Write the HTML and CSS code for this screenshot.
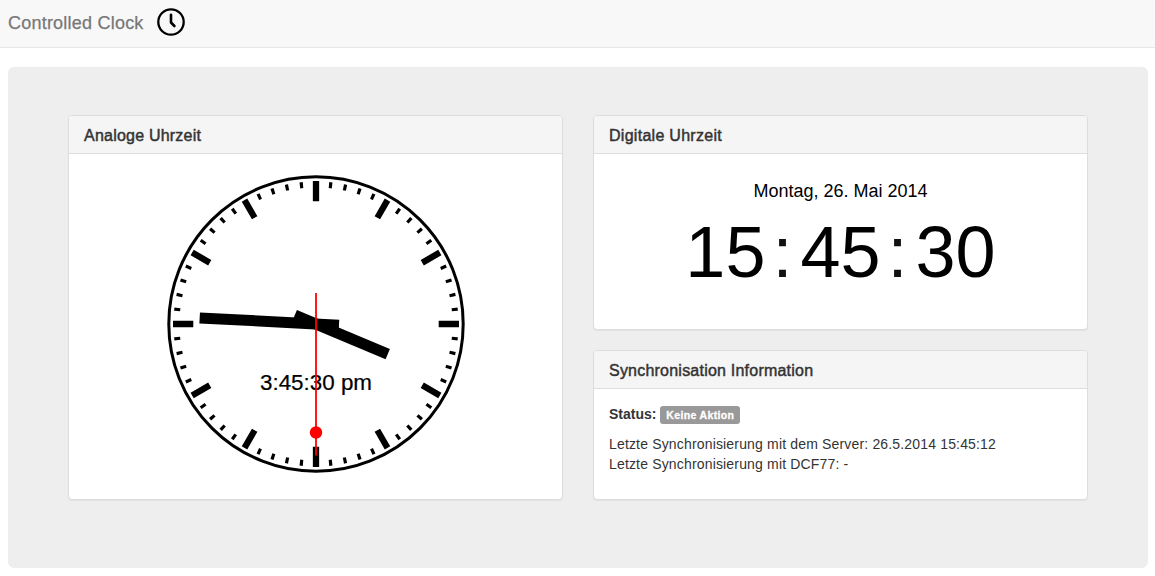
FILE: index.html
```html
<!DOCTYPE html>
<html lang="de">
<head>
<meta charset="utf-8">
<title>Controlled Clock</title>
<link rel="stylesheet" href="styles.css">
</head>
<body>
<header class="navbar">
  <span class="brand">Controlled Clock</span>
  <svg class="brand-icon" width="30" height="30" viewBox="0 0 30 30" fill="none" stroke="#000">
    <circle cx="15" cy="15" r="12.7" stroke-width="2.3"/>
    <path d="M15 7.8V15.5L18.4 19" stroke-width="2.6" stroke-linecap="round" stroke-linejoin="round"/>
  </svg>
</header>
<main class="jumbotron">
  <section class="panel">
    <h2 class="panel-heading"><span class="t-analog">Analoge Uhrzeit</span></h2>
    <div class="panel-body analog">
      <svg class="clock" width="300" height="300" viewBox="-150 -150 300 300">
        <circle class="ring" r="147.2"/>
        <circle class="minutes" r="139.5" pathLength="600"/>
        <defs><path id="pair" d="M0-143V-122.7M0 143V122.7"/></defs>
        <g class="hours">
          <use href="#pair"/>
          <use href="#pair" transform="rotate(30)"/>
          <use href="#pair" transform="rotate(60)"/>
          <use href="#pair" transform="rotate(90)"/>
          <use href="#pair" transform="rotate(120)"/>
          <use href="#pair" transform="rotate(150)"/>
        </g>
        <text class="clock-text" x="0" y="66" text-anchor="middle">3:45:30 pm</text>
        <path class="hand" d="M0 23V-77.8" transform="rotate(112.75)"/>
        <path class="hand" d="M0 23V-116.5" transform="rotate(273)"/>
        <path class="second" d="M0-31V131.5"/>
        <circle class="second-dot" cy="108.5" r="6.2"/>
      </svg>
    </div>
  </section>
  <div class="column">
    <section class="panel">
      <h2 class="panel-heading"><span class="t-digital">Digitale Uhrzeit</span></h2>
      <div class="panel-body digital">
        <div class="date">Montag, 26. Mai 2014</div>
        <div class="time"><span>15</span><span class="colon">:</span><span>45</span><span class="colon">:</span><span>30</span></div>
      </div>
    </section>
    <section class="panel sync">
      <h2 class="panel-heading"><span class="t-sync">Synchronisation Information</span></h2>
      <div class="panel-body info">
        <p class="status"><strong>Status:</strong> <span class="label">Keine Aktion</span></p>
        <p class="line">Letzte Synchronisierung mit dem Server: 26.5.2014 15:45:12<br>Letzte Synchronisierung mit DCF77: -</p>
      </div>
    </section>
  </div>
</main>
</body>
</html>
```

FILE: styles.css
```css
* { box-sizing: border-box; }
body { margin: 0; background: #fff; color: #333; font: 14px/20px "Liberation Sans", Arial, sans-serif; }
.navbar { display: flex; align-items: center; height: 48px; padding: 0 8px 3px; background: #f8f8f8; border-bottom: 1px solid #e7e7e7; }
.brand { padding-top: 2px; color: #777; font-size: 18px; letter-spacing: 0.22px; -webkit-text-stroke: 0.25px; white-space: nowrap; width: 148px; }
.jumbotron { display: grid; grid-template-columns: 495px 495px; gap: 30px; margin: 19px 7px 0 8px; height: 501px; padding: 48px 60px 68px; background: #eee; border-radius: 6px; }
.column { display: grid; grid-template-rows: 215px 150px; gap: 20px; }
.panel { background: #fff; border: 1px solid #ddd; border-radius: 4px; box-shadow: 0 1px 1px rgba(0,0,0,.05); }
.panel-heading { margin: 0; height: 38px; padding: 10px 15px 8px; font-size: 16px; line-height: 20px; font-weight: 400; background: #f5f5f5; border-bottom: 1px solid #ddd; border-radius: 3px 3px 0 0; -webkit-text-stroke: 0.45px #333; white-space: nowrap; }
.t-analog, .t-sync { letter-spacing: 0.22px; }
.t-digital { letter-spacing: 0.28px; }
.analog { display: flex; justify-content: center; padding-top: 20px; }
.clock { display: block; }
.ring { fill: none; stroke: #000; stroke-width: 3; }
.minutes { fill: none; stroke: #000; stroke-width: 6; stroke-dasharray: 2.2 7.8; stroke-dashoffset: 1.1; }
.hours { stroke: #000; stroke-width: 6.3; }
.hand { stroke: #000; stroke-width: 11; }
.second { stroke: #f00; stroke-width: 1.8; }
.second-dot { fill: #f00; }
.clock-text { font-size: 22.4px; fill: #000; stroke: #000; stroke-width: 0.2px; }
.digital { color: #000; padding-top: 25px; }
.date { font-size: 18px; line-height: 24px; text-align: center; }
.time { display: flex; justify-content: center; font-size: 72px; line-height: 80px; margin-top: 9px; }
.colon { width: 35px; padding-left: 7px; color: #111; }
.info { padding: 15px; }
.status { margin: 0 0 10px; line-height: 20px; }
.label { display: inline-block; height: 18px; width: 80px; border-radius: 3px; background: #999; color: #fff; font-size: 10.5px; font-weight: 700; line-height: 18px; letter-spacing: 0.35px; text-align: center; vertical-align: middle; -webkit-text-stroke: 0.3px #fff; }
.line { margin: 0; letter-spacing: 0.165px; }
```
